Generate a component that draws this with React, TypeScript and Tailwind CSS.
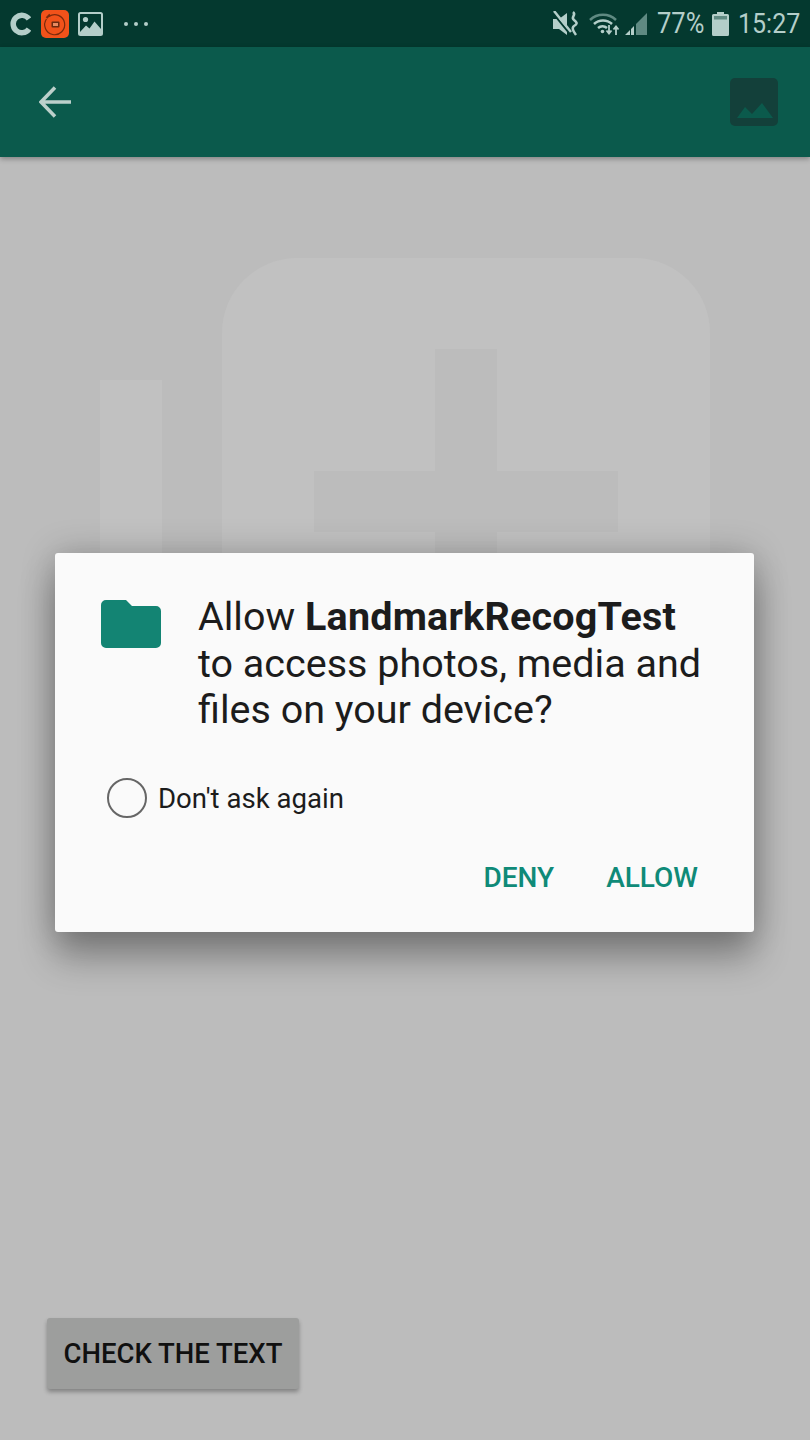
export default function App() {
  return (
    <div className="relative flex h-[1440px] w-[810px] flex-col overflow-hidden bg-[#bcbcbc] font-['Roboto',sans-serif]">
      {/* Status bar */}
      <div className="flex h-[47px] shrink-0 items-center justify-between bg-[#04392f] pl-[9px] pr-[10px] text-[#b4cec9]">
        <div className="flex items-center">
          <svg width="22" height="24" viewBox="0 0 22 24" fill="none">
            <path d="M20 7A8.700 8.700 0 1 0 20 17" stroke="#b4cec9" strokeWidth="5.500" />
          </svg>
          <svg className="ml-[10px]" width="28" height="28" viewBox="0 0 28 28">
            <rect width="28" height="28" rx="5" fill="#f1521a" />
            <path d="M8 6.500A10 10 0 1 1 5.500 9" fill="none" stroke="#7a2a0c" strokeWidth="1.200" />
            <path d="M5.500 8 9 4.500" stroke="#7a2a0c" strokeWidth="2.200" />
            <rect x="10.500" y="11.500" width="8" height="6" rx="1" fill="#6b2a10" />
            <rect x="12" y="13" width="5" height="3" fill="#e98a60" />
          </svg>
          <svg className="ml-[9px]" width="25" height="24" viewBox="0 0 25 24">
            <rect x="1" y="1" width="23" height="22" rx="1.500" fill="none" stroke="#b4cec9" strokeWidth="2" />
            <circle cx="7.500" cy="7.500" r="2.600" fill="#b4cec9" />
            <path d="M2 20 8 13.500l3.500 3 5-7 6.500 7.500V23H2Z" fill="#b4cec9" />
          </svg>
          <div className="ml-[21px] flex gap-[6px]">
            <span className="size-[4px] rounded-full bg-[#b4cec9]" />
            <span className="size-[4px] rounded-full bg-[#b4cec9]" />
            <span className="size-[4px] rounded-full bg-[#b4cec9]" />
          </div>
        </div>
        <div className="flex items-center">
          <svg width="27" height="26" viewBox="0 0 27 26" fill="none">
            <path d="M1 8h6l8-6v22l-8-6H1Z" fill="#b4cec9" />
            <path d="M0 1 18 23" stroke="#04392f" strokeWidth="2" />
            <path d="M2 0 19 21" stroke="#b4cec9" strokeWidth="2.500" />
            <path d="M21 1c4 3-3 5 1 8s3 4 0 6 0 6 2 9" stroke="#b4cec9" strokeWidth="2.500" />
          </svg>
          <svg className="ml-[10px]" width="31" height="26" viewBox="0 0 31 26" fill="none">
            <path d="M1 9a19 19 0 0 1 26 0" stroke="#5f8a82" strokeWidth="2.500" />
            <path d="M5 13a13 13 0 0 1 18 0" stroke="#b4cec9" strokeWidth="2.500" />
            <path d="M9 17a7 7 0 0 1 9 0" stroke="#b4cec9" strokeWidth="2.500" />
            <circle cx="13.500" cy="20.500" r="1.800" fill="#b4cec9" />
            <path d="M20 14v8m-2.500-2.500 2.500 3 2.500-3M27 24v-8m-2.500 2.500 2.500-3 2.500 3" stroke="#b4cec9" strokeWidth="1.800" />
          </svg>
          <svg className="ml-[4px]" width="24" height="26" viewBox="0 0 24 26">
            <path d="M12 13 23 2v22H12Z" fill="#5f8a82" />
            <path d="M1 24 6 19v5Z M7 18l3-3v9H7Z" fill="#b4cec9" />
          </svg>
          <span className="ml-[9px] w-[46px] scale-y-[1.12] text-[25.500px] leading-none">77%</span>
          <svg className="ml-[9px]" width="17" height="24" viewBox="0 0 17 24">
            <path d="M5 0h7v2h3.500A1.500 1.500 0 0 1 17 3.500v19a1.500 1.500 0 0 1-1.500 1.500h-14A1.500 1.500 0 0 1 0 22.500v-19A1.500 1.500 0 0 1 1.500 2H5Z" fill="#b4cec9" />
            <rect x="2" y="4" width="13" height="3.500" fill="#5f8a82" />
          </svg>
          <span className="ml-[9px] w-[62px] scale-y-[1.12] text-[25px] leading-none">15:27</span>
        </div>
      </div>

      {/* App bar */}
      <div className="z-10 flex h-[110px] shrink-0 items-center justify-between bg-[#0b5a4c] pl-[39px] pr-[32px] shadow-[0_2px_5px_rgba(0,0,0,0.3)]">
        <svg width="32" height="32" viewBox="0 0 32 32" fill="none">
          <path d="M32 16H2M16 1.500 2 16l14 14.500" stroke="#bcd0cb" strokeWidth="3.500" />
        </svg>
        <svg width="48" height="48" viewBox="0 0 48 48">
          <rect width="48" height="48" rx="5" fill="#13403a" />
          <path d="M7 40 15 29l7 7 10-11 11 15Z" fill="#0b5a4c" />
        </svg>
      </div>

      {/* Content */}
      <div className="relative flex flex-1 flex-col justify-end pb-[51px] pl-[47px]">
        <svg className="absolute left-0 top-0" width="810" height="420" viewBox="0 0 810 420">
          <path d="M222 396V176a75 75 0 0 1 75-75h338a75 75 0 0 1 75 75v220Z" fill="#c1c1c1" />
          <rect x="100" y="223" width="62" height="180" fill="#c1c1c1" />
          <rect x="314" y="314" width="304" height="61" fill="#bcbcbc" />
          <rect x="435" y="192" width="62" height="210" fill="#bcbcbc" />
        </svg>
        <button className="relative flex h-[71px] w-[252px] items-center justify-center rounded-[3px] bg-[#9d9e9d] text-[27.500px] font-medium text-[#101010] shadow-[0_3px_4px_rgba(0,0,0,0.3)]">
          CHECK THE TEXT
        </button>
      </div>

      {/* Permission dialog */}
      <div className="absolute left-[55px] top-[553px] h-[379px] w-[699px] rounded-[3px] bg-[#fafafa] shadow-[0_26px_36px_rgba(0,0,0,0.3),0_0_34px_rgba(0,0,0,0.22)]">
        <div className="flex pl-[46px] pt-[41px]">
          <svg className="mt-[6px]" width="60" height="48" viewBox="0 0 60 48">
            <path d="M5 0h20l6 6h24a5 5 0 0 1 5 5v32a5 5 0 0 1-5 5H5a5 5 0 0 1-5-5V5a5 5 0 0 1 5-5Z" fill="#138473" />
          </svg>
          <p className="ml-[37px] w-[540px] text-[39.500px] leading-[46.500px] text-[#1c1c1c]">
            <span className="block">Allow <b className="font-bold tracking-[0.2px]">LandmarkRecogTest</b></span>
            <span className="block">to access photos, media and</span>
            <span className="block">files on your device?</span>
          </p>
        </div>
        <div className="ml-[52px] mt-[44px] flex items-center">
          <span className="size-[40px] rounded-full border-2 border-[#666]" />
          <span className="ml-[11px] text-[27.600px] text-[#1c1c1c]">Don't ask again</span>
        </div>
        <div className="mr-[56px] mt-[38px] flex justify-end gap-[52px] text-[28px] font-medium text-[#0f8a78]">
          <span>DENY</span>
          <span>ALLOW</span>
        </div>
      </div>
    </div>
  );
}
